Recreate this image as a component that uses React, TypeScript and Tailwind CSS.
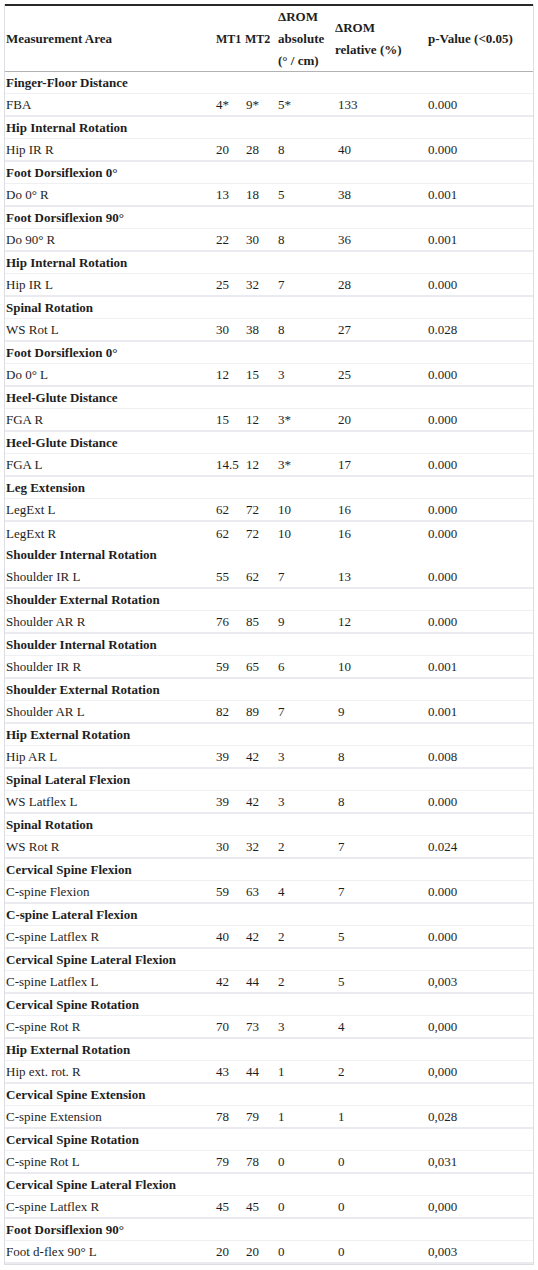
import React from 'react'

type Row = [string, string, string, string, string, string]
type Group = { title: string; rows: Row[] }

// group rows and their measurements, in the order of the table
const groups: Group[] = [
  { title: 'Finger-Floor Distance', rows: [['FBA', '4*', '9*', '5*', '133', '0.000']] },
  { title: 'Hip Internal Rotation', rows: [['Hip IR R', '20', '28', '8', '40', '0.000']] },
  { title: 'Foot Dorsiflexion 0°', rows: [['Do 0° R', '13', '18', '5', '38', '0.001']] },
  { title: 'Foot Dorsiflexion 90°', rows: [['Do 90° R', '22', '30', '8', '36', '0.001']] },
  { title: 'Hip Internal Rotation', rows: [['Hip IR L', '25', '32', '7', '28', '0.000']] },
  { title: 'Spinal Rotation', rows: [['WS Rot L', '30', '38', '8', '27', '0.028']] },
  { title: 'Foot Dorsiflexion 0°', rows: [['Do 0° L', '12', '15', '3', '25', '0.000']] },
  { title: 'Heel-Glute Distance', rows: [['FGA R', '15', '12', '3*', '20', '0.000']] },
  { title: 'Heel-Glute Distance', rows: [['FGA L', '14.5', '12', '3*', '17', '0.000']] },
  { title: 'Leg Extension', rows: [['LegExt L', '62', '72', '10', '16', '0.000'], ['LegExt R', '62', '72', '10', '16', '0.000']] },
  { title: 'Shoulder Internal Rotation', rows: [['Shoulder IR L', '55', '62', '7', '13', '0.000']] },
  { title: 'Shoulder External Rotation', rows: [['Shoulder AR R', '76', '85', '9', '12', '0.000']] },
  { title: 'Shoulder Internal Rotation', rows: [['Shoulder IR R', '59', '65', '6', '10', '0.001']] },
  { title: 'Shoulder External Rotation', rows: [['Shoulder AR L', '82', '89', '7', '9', '0.001']] },
  { title: 'Hip External Rotation', rows: [['Hip AR L', '39', '42', '3', '8', '0.008']] },
  { title: 'Spinal Lateral Flexion', rows: [['WS Latflex L', '39', '42', '3', '8', '0.000']] },
  { title: 'Spinal Rotation', rows: [['WS Rot R', '30', '32', '2', '7', '0.024']] },
  { title: 'Cervical Spine Flexion', rows: [['C-spine Flexion', '59', '63', '4', '7', '0.000']] },
  { title: 'C-spine Lateral Flexion', rows: [['C-spine Latflex R', '40', '42', '2', '5', '0.000']] },
  { title: 'Cervical Spine Lateral Flexion', rows: [['C-spine Latflex L', '42', '44', '2', '5', '0,003']] },
  { title: 'Cervical Spine Rotation', rows: [['C-spine Rot R', '70', '73', '3', '4', '0,000']] },
  { title: 'Hip External Rotation', rows: [['Hip ext. rot. R', '43', '44', '1', '2', '0,000']] },
  { title: 'Cervical Spine Extension', rows: [['C-spine Extension', '78', '79', '1', '1', '0,028']] },
  { title: 'Cervical Spine Rotation', rows: [['C-spine Rot L', '79', '78', '0', '0', '0,031']] },
  { title: 'Cervical Spine Lateral Flexion', rows: [['C-spine Latflex R', '45', '45', '0', '0', '0,000']] },
  { title: 'Foot Dorsiflexion 90°', rows: [['Foot d-flex 90° L', '20', '20', '0', '0', '0,003']] },
]

const cols = 'grid grid-cols-[210px_29px_32px_57px_94px_1fr] items-center'

export default function App() {
  return (
    <div className="min-h-[1270px] bg-white pl-1 pt-1 text-[13px] text-[#1e1e1e] [font-family:'Liberation_Serif','Times_New_Roman',serif]">
      <div className="w-[530px] border-x border-b border-x-[#dddee3] border-b-[#dddee3]">
        {/* header */}
        <div className={`${cols} h-[68px] border-t-2 border-b border-t-[#2a2a2a] border-b-[#b2b2b2] font-bold leading-[22px]`}>
          <div className="pl-[1px]">Measurement Area</div>
          <div className="pl-[1px] text-[12px]">MT1</div>
          <div className="pl-[1px] text-[12px]">MT2</div>
          <div className="pl-[2px]">ΔROM<br />absolute<br />(° / cm)</div>
          <div className="pl-[2px]">ΔROM<br />relative (%)</div>
          <div className="pl-[1px]">p-Value (&lt;0.05)</div>
        </div>

        {groups.map((g, gi) => (
          <React.Fragment key={gi}>
            <div className={`h-[22px] border-b ${gi === 10 ? 'border-b-transparent' : 'border-b-[#eff0f4]'} pl-[1px] font-bold leading-[21px]`}>
              {g.title}
            </div>
            {g.rows.map((r, ri) => {
              const last = gi === 9 && ri === 1
              return (
                <div key={ri} className={`${cols} ${last ? 'h-[22px]' : 'h-[23px] border-b-2 border-b-[#eaebf1]'} leading-[21px]`}>
                  <div className="pl-[1px]">{r[0]}</div>
                  <div className="pl-[1px]">{r[1]}</div>
                  <div className="pl-[2px]">{r[2]}</div>
                  <div className="pl-[2px]">{r[3]}</div>
                  <div className="pl-[5px]">{r[4]}</div>
                  <div className="pl-[1px]">{r[5]}</div>
                </div>
              )
            })}
          </React.Fragment>
        ))}
      </div>
    </div>
  )
}
